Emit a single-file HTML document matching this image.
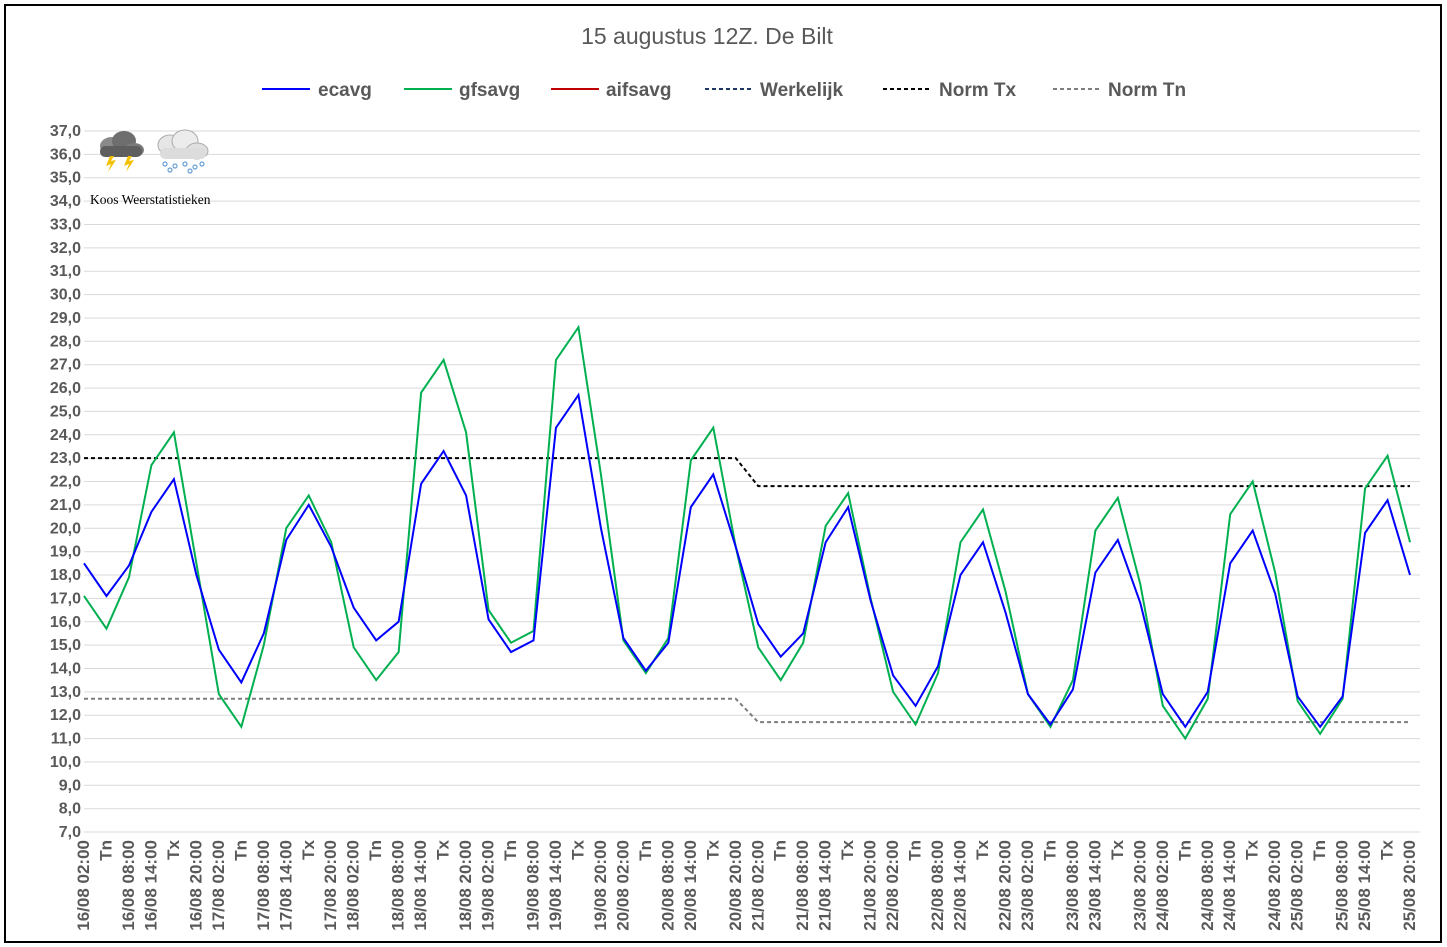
<!DOCTYPE html>
<html><head><meta charset="utf-8"><style>
body{margin:0;background:#fff;}
svg{display:block;font-family:"Liberation Sans",sans-serif;}
.yl{font-size:16px;font-weight:bold;fill:#595959;text-anchor:end}
.xl{font-family:"Liberation Sans Narrow","Liberation Sans",sans-serif;font-size:17px;font-weight:bold;fill:#595959;text-anchor:end}
.lg{font-size:19px;font-weight:bold;fill:#595959}
</style></head><body>
<svg width="1447" height="947" viewBox="0 0 1447 947">
<rect x="0" y="0" width="1447" height="947" fill="#fff"/>
<rect x="5" y="5" width="1436" height="937" fill="none" stroke="#000" stroke-width="2"/>
<text x="707" y="44" text-anchor="middle" font-size="23" fill="#595959">15 augustus 12Z. De Bilt</text>
<g>
<line x1="262" y1="89" x2="310" y2="89" stroke="#0000ff" stroke-width="2"/><text class="lg" x="318" y="96">ecavg</text>
<line x1="404" y1="89" x2="452" y2="89" stroke="#00b050" stroke-width="2"/><text class="lg" x="459" y="96">gfsavg</text>
<line x1="551" y1="89" x2="599" y2="89" stroke="#c00000" stroke-width="2"/><text class="lg" x="606" y="96">aifsavg</text>
<line x1="705" y1="89" x2="753" y2="89" stroke="#1f3864" stroke-width="2" stroke-dasharray="4,3"/><text class="lg" x="760" y="96">Werkelijk</text>
<line x1="883" y1="89" x2="931" y2="89" stroke="#000" stroke-width="2" stroke-dasharray="4,3"/><text class="lg" x="939" y="96">Norm Tx</text>
<line x1="1053" y1="89" x2="1101" y2="89" stroke="#7f7f7f" stroke-width="2" stroke-dasharray="4,3"/><text class="lg" x="1108" y="96">Norm Tn</text>
</g>
<g stroke="#d9d9d9" stroke-width="1">
<line x1="84" x2="1420" y1="131" y2="131"/><line x1="84" x2="1420" y1="154.4" y2="154.4"/><line x1="84" x2="1420" y1="177.7" y2="177.7"/><line x1="84" x2="1420" y1="201.1" y2="201.1"/><line x1="84" x2="1420" y1="224.5" y2="224.5"/><line x1="84" x2="1420" y1="247.9" y2="247.9"/><line x1="84" x2="1420" y1="271.2" y2="271.2"/><line x1="84" x2="1420" y1="294.6" y2="294.6"/><line x1="84" x2="1420" y1="318" y2="318"/><line x1="84" x2="1420" y1="341.3" y2="341.3"/><line x1="84" x2="1420" y1="364.7" y2="364.7"/><line x1="84" x2="1420" y1="388.1" y2="388.1"/><line x1="84" x2="1420" y1="411.4" y2="411.4"/><line x1="84" x2="1420" y1="434.8" y2="434.8"/><line x1="84" x2="1420" y1="458.2" y2="458.2"/><line x1="84" x2="1420" y1="481.5" y2="481.5"/><line x1="84" x2="1420" y1="504.9" y2="504.9"/><line x1="84" x2="1420" y1="528.3" y2="528.3"/><line x1="84" x2="1420" y1="551.7" y2="551.7"/><line x1="84" x2="1420" y1="575" y2="575"/><line x1="84" x2="1420" y1="598.4" y2="598.4"/><line x1="84" x2="1420" y1="621.8" y2="621.8"/><line x1="84" x2="1420" y1="645.1" y2="645.1"/><line x1="84" x2="1420" y1="668.5" y2="668.5"/><line x1="84" x2="1420" y1="691.9" y2="691.9"/><line x1="84" x2="1420" y1="715.2" y2="715.2"/><line x1="84" x2="1420" y1="738.6" y2="738.6"/><line x1="84" x2="1420" y1="762" y2="762"/><line x1="84" x2="1420" y1="785.3" y2="785.3"/><line x1="84" x2="1420" y1="808.7" y2="808.7"/><line x1="84" x2="1420" y1="832" y2="832"/>
</g>
<g class="yl">
<text x="81" y="136">37,0</text><text x="81" y="159.4">36,0</text><text x="81" y="182.7">35,0</text><text x="81" y="206.1">34,0</text><text x="81" y="229.5">33,0</text><text x="81" y="252.9">32,0</text><text x="81" y="276.2">31,0</text><text x="81" y="299.6">30,0</text><text x="81" y="323">29,0</text><text x="81" y="346.3">28,0</text><text x="81" y="369.7">27,0</text><text x="81" y="393.1">26,0</text><text x="81" y="416.4">25,0</text><text x="81" y="439.8">24,0</text><text x="81" y="463.2">23,0</text><text x="81" y="486.5">22,0</text><text x="81" y="509.9">21,0</text><text x="81" y="533.3">20,0</text><text x="81" y="556.7">19,0</text><text x="81" y="580">18,0</text><text x="81" y="603.4">17,0</text><text x="81" y="626.8">16,0</text><text x="81" y="650.1">15,0</text><text x="81" y="673.5">14,0</text><text x="81" y="696.9">13,0</text><text x="81" y="720.2">12,0</text><text x="81" y="743.6">11,0</text><text x="81" y="767">10,0</text><text x="81" y="790.3">9,0</text><text x="81" y="813.7">8,0</text><text x="81" y="837">7,0</text>
</g>
<g transform="translate(84,995.6) scale(22.475,-23.37)" fill="none" stroke-width="2">
<polyline vector-effect="non-scaling-stroke" stroke="#000" stroke-dasharray="4,3" points="0,23 29,23 30,21.8 59,21.8"/>
<polyline vector-effect="non-scaling-stroke" stroke="#7f7f7f" stroke-dasharray="4,3" points="0,12.7 29,12.7 30,11.7 59,11.7"/>
<polyline vector-effect="non-scaling-stroke" stroke="#00b050" points="0,17.1 1,15.7 2,17.9 3,22.7 4,24.1 5,18.5 6,12.9 7,11.5 8,15.0 9,20.0 10,21.4 11,19.4 12,14.9 13,13.5 14,14.7 15,25.8 16,27.2 17,24.1 18,16.5 19,15.1 20,15.6 21,27.2 22,28.6 23,22.3 24,15.2 25,13.8 26,15.3 27,22.9 28,24.3 29,19.2 30,14.9 31,13.5 32,15.1 33,20.1 34,21.5 35,17.0 36,13.0 37,11.6 38,13.8 39,19.4 40,20.8 41,17.3 42,12.9 43,11.5 44,13.5 45,19.9 46,21.3 47,17.6 48,12.4 49,11.0 50,12.7 51,20.6 52,22.0 53,18.1 54,12.6 55,11.2 56,12.7 57,21.7 58,23.1 59,19.4"/>
<polyline vector-effect="non-scaling-stroke" stroke="#0000ff" points="0,18.5 1,17.1 2,18.4 3,20.7 4,22.1 5,18.0 6,14.8 7,13.4 8,15.5 9,19.5 10,21.0 11,19.2 12,16.6 13,15.2 14,16.0 15,21.9 16,23.3 17,21.4 18,16.1 19,14.7 20,15.2 21,24.3 22,25.7 23,20.0 24,15.3 25,13.9 26,15.1 27,20.9 28,22.3 29,19.2 30,15.9 31,14.5 32,15.5 33,19.4 34,20.9 35,16.9 36,13.7 37,12.4 38,14.1 39,18.0 40,19.4 41,16.4 42,12.9 43,11.6 44,13.1 45,18.1 46,19.5 47,16.8 48,12.9 49,11.5 50,13.0 51,18.5 52,19.9 53,17.2 54,12.8 55,11.5 56,12.8 57,19.8 58,21.2 59,18.0"/>
</g>
<g class="xl">
<text transform="translate(89,840) rotate(-90)">16/08 02:00</text>
<text transform="translate(111.5,840) rotate(-90)">Tn</text>
<text transform="translate(134,840) rotate(-90)">16/08 08:00</text>
<text transform="translate(156.4,840) rotate(-90)">16/08 14:00</text>
<text transform="translate(178.9,840) rotate(-90)">Tx</text>
<text transform="translate(201.4,840) rotate(-90)">16/08 20:00</text>
<text transform="translate(223.9,840) rotate(-90)">17/08 02:00</text>
<text transform="translate(246.3,840) rotate(-90)">Tn</text>
<text transform="translate(268.8,840) rotate(-90)">17/08 08:00</text>
<text transform="translate(291.3,840) rotate(-90)">17/08 14:00</text>
<text transform="translate(313.8,840) rotate(-90)">Tx</text>
<text transform="translate(336.2,840) rotate(-90)">17/08 20:00</text>
<text transform="translate(358.7,840) rotate(-90)">18/08 02:00</text>
<text transform="translate(381.2,840) rotate(-90)">Tn</text>
<text transform="translate(403.7,840) rotate(-90)">18/08 08:00</text>
<text transform="translate(426.1,840) rotate(-90)">18/08 14:00</text>
<text transform="translate(448.6,840) rotate(-90)">Tx</text>
<text transform="translate(471.1,840) rotate(-90)">18/08 20:00</text>
<text transform="translate(493.6,840) rotate(-90)">19/08 02:00</text>
<text transform="translate(516,840) rotate(-90)">Tn</text>
<text transform="translate(538.5,840) rotate(-90)">19/08 08:00</text>
<text transform="translate(561,840) rotate(-90)">19/08 14:00</text>
<text transform="translate(583.5,840) rotate(-90)">Tx</text>
<text transform="translate(605.9,840) rotate(-90)">19/08 20:00</text>
<text transform="translate(628.4,840) rotate(-90)">20/08 02:00</text>
<text transform="translate(650.9,840) rotate(-90)">Tn</text>
<text transform="translate(673.4,840) rotate(-90)">20/08 08:00</text>
<text transform="translate(695.8,840) rotate(-90)">20/08 14:00</text>
<text transform="translate(718.3,840) rotate(-90)">Tx</text>
<text transform="translate(740.8,840) rotate(-90)">20/08 20:00</text>
<text transform="translate(763.3,840) rotate(-90)">21/08 02:00</text>
<text transform="translate(785.7,840) rotate(-90)">Tn</text>
<text transform="translate(808.2,840) rotate(-90)">21/08 08:00</text>
<text transform="translate(830.7,840) rotate(-90)">21/08 14:00</text>
<text transform="translate(853.2,840) rotate(-90)">Tx</text>
<text transform="translate(875.6,840) rotate(-90)">21/08 20:00</text>
<text transform="translate(898.1,840) rotate(-90)">22/08 02:00</text>
<text transform="translate(920.6,840) rotate(-90)">Tn</text>
<text transform="translate(943.1,840) rotate(-90)">22/08 08:00</text>
<text transform="translate(965.5,840) rotate(-90)">22/08 14:00</text>
<text transform="translate(988,840) rotate(-90)">Tx</text>
<text transform="translate(1010.5,840) rotate(-90)">22/08 20:00</text>
<text transform="translate(1033,840) rotate(-90)">23/08 02:00</text>
<text transform="translate(1055.4,840) rotate(-90)">Tn</text>
<text transform="translate(1077.9,840) rotate(-90)">23/08 08:00</text>
<text transform="translate(1100.4,840) rotate(-90)">23/08 14:00</text>
<text transform="translate(1122.9,840) rotate(-90)">Tx</text>
<text transform="translate(1145.3,840) rotate(-90)">23/08 20:00</text>
<text transform="translate(1167.8,840) rotate(-90)">24/08 02:00</text>
<text transform="translate(1190.3,840) rotate(-90)">Tn</text>
<text transform="translate(1212.8,840) rotate(-90)">24/08 08:00</text>
<text transform="translate(1235.2,840) rotate(-90)">24/08 14:00</text>
<text transform="translate(1257.7,840) rotate(-90)">Tx</text>
<text transform="translate(1280.2,840) rotate(-90)">24/08 20:00</text>
<text transform="translate(1302.7,840) rotate(-90)">25/08 02:00</text>
<text transform="translate(1325.1,840) rotate(-90)">Tn</text>
<text transform="translate(1347.6,840) rotate(-90)">25/08 08:00</text>
<text transform="translate(1370.1,840) rotate(-90)">25/08 14:00</text>
<text transform="translate(1392.6,840) rotate(-90)">Tx</text>
<text transform="translate(1415,840) rotate(-90)">25/08 20:00</text>
</g>
<g>
<ellipse cx="112" cy="146" rx="12" ry="9" fill="#8a8a8a"/>
<ellipse cx="124" cy="141" rx="12" ry="10" fill="#6e6e6e"/>
<ellipse cx="134" cy="150" rx="10" ry="7" fill="#7a7a7a"/>
<rect x="100" y="146" width="42" height="11" rx="5" fill="#5e5e5e"/>
<polygon points="110,156 106,166 111,164 108,172 116,160 111,161 114,156" fill="#f2c200"/>
<polygon points="128,156 124,166 129,164 126,172 134,160 129,161 132,156" fill="#f2c200"/>
<ellipse cx="170" cy="145" rx="12" ry="10" fill="#e6e6e6" stroke="#aaa"/>
<ellipse cx="185" cy="141" rx="13" ry="11" fill="#ececec" stroke="#aaa"/>
<ellipse cx="197" cy="151" rx="11" ry="8" fill="#e0e0e0" stroke="#aaa"/>
<rect x="160" y="148" width="46" height="11" rx="5" fill="#dcdcdc"/>
<g fill="none" stroke="#6a9fd4" stroke-width="1.2"><circle cx="165" cy="164" r="2"/><circle cx="175" cy="166" r="2"/><circle cx="185" cy="164" r="2"/><circle cx="195" cy="167" r="2"/><circle cx="170" cy="170" r="2"/><circle cx="190" cy="171" r="2"/><circle cx="202" cy="164" r="2"/></g>
<text x="90" y="204" font-family="Liberation Serif, serif" font-size="13.5" fill="#000">Koos Weerstatistieken</text>
</g>
</svg>
</body></html>
